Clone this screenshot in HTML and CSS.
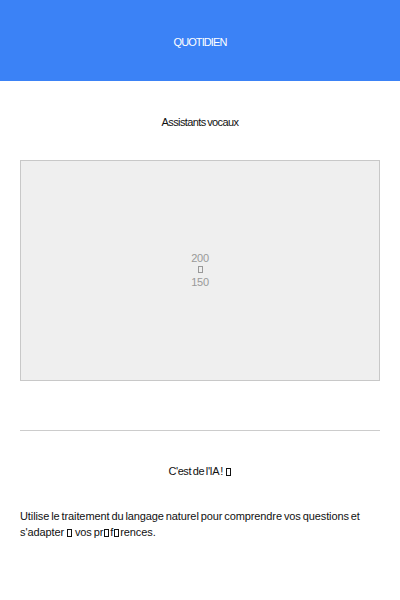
FILE: index.html
```html
<!DOCTYPE html>
<html lang="fr">
<head>
<meta charset="utf-8">
<link rel="stylesheet" href="styles.css">
</head>
<body>
<header class="top"><span class="top-title">QUOTIDIEN</span></header>
<main class="content">
  <h2 class="subtitle">Assistants vocaux</h2>
  <div class="placeholder">
    <span>200</span>
    <span class="tofu" aria-hidden="true"></span>
    <span>150</span>
  </div>
  <hr class="sep">
  <h3 class="tagline">C'est de l'IA ! <span class="tofu" aria-hidden="true"></span></h3>
  <p class="desc">Utilise le traitement du langage naturel pour comprendre vos questions et s'adapter <span class="tofu" aria-hidden="true"></span> vos pr<span class="tofu" aria-hidden="true"></span>f<span class="tofu" aria-hidden="true"></span>rences.</p>
</main>
</body>
</html>
```
FILE: styles.css
```css
* { box-sizing: border-box; }
body {
  margin: 0;
  font-family: "Liberation Sans", Arial, sans-serif;
  font-size: 11px;
  color: #111;
  background: #fff;
}
.top {
  height: 81px;
  background: #3b82f6;
  display: flex;
  align-items: center;
  justify-content: center;
}
.top-title {
  color: #fff;
  font-size: 11px;
  letter-spacing: -0.9px;
  padding-top: 3px;
}
.content {
  padding: 0 20px;
}
.subtitle {
  margin: 34px 0 0;
  height: 14px;
  line-height: 14px;
  font-size: 11px;
  font-weight: normal;
  text-align: center;
  letter-spacing: -0.6px;
  word-spacing: -1px;
}
.placeholder {
  margin-top: 31px;
  height: 221px;
  padding-bottom: 2px;
  background: #efefef;
  border: 1px solid #c8c8c8;
  display: flex;
  flex-direction: column;
  align-items: center;
  justify-content: center;
  color: #999;
  line-height: 12px;
  font-size: 11px;
  letter-spacing: -0.3px;
}
.sep {
  margin: 49px 0 0;
  border: 0;
  border-top: 1px solid #cccccc;
  height: 0;
}
.tagline {
  margin: 33px 0 0;
  line-height: 14px;
  font-size: 11px;
  font-weight: normal;
  text-align: center;
  letter-spacing: -0.4px;
  word-spacing: -1px;
}
.desc {
  margin: 30px 0 0;
  line-height: 16px;
  font-size: 11px;
  letter-spacing: -0.1px;
  word-spacing: -1px;
}
.tofu {
  display: inline-block;
  width: 5px;
  height: 8px;
  border: 1px solid currentColor;
  vertical-align: -1px;
  margin: 0 1px;
}
.placeholder .tofu {
  width: 5px;
  height: 7px;
  margin: 2px 0 3px;
}
```
